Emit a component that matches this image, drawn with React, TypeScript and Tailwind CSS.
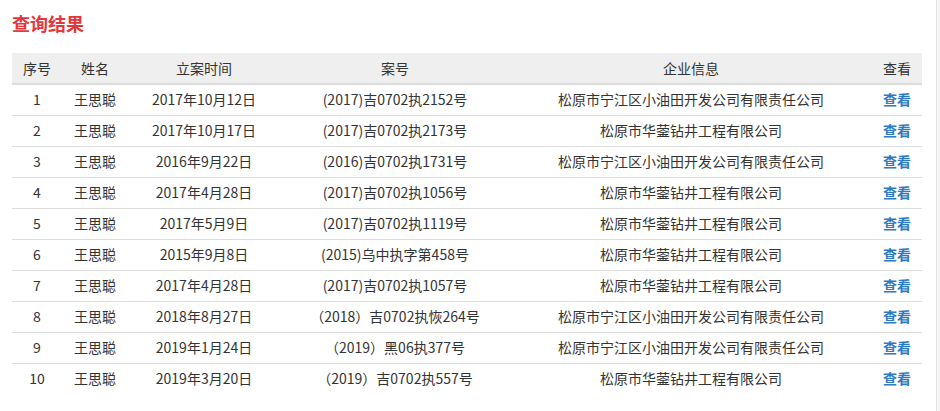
const rows = [
  ["1", "王思聪", "2017年10月12日", "(2017)吉0702执2152号", "松原市宁江区小油田开发公司有限责任公司"],
  ["2", "王思聪", "2017年10月17日", "(2017)吉0702执2173号", "松原市华蓥钻井工程有限公司"],
  ["3", "王思聪", "2016年9月22日", "(2016)吉0702执1731号", "松原市宁江区小油田开发公司有限责任公司"],
  ["4", "王思聪", "2017年4月28日", "(2017)吉0702执1056号", "松原市华蓥钻井工程有限公司"],
  ["5", "王思聪", "2017年5月9日", "(2017)吉0702执1119号", "松原市华蓥钻井工程有限公司"],
  ["6", "王思聪", "2015年9月8日", "(2015)乌中执字第458号", "松原市华蓥钻井工程有限公司"],
  ["7", "王思聪", "2017年4月28日", "(2017)吉0702执1057号", "松原市华蓥钻井工程有限公司"],
  ["8", "王思聪", "2018年8月27日", "（2018）吉0702执恢264号", "松原市宁江区小油田开发公司有限责任公司"],
  ["9", "王思聪", "2019年1月24日", "（2019）黑06执377号", "松原市宁江区小油田开发公司有限责任公司"],
  ["10", "王思聪", "2019年3月20日", "（2019）吉0702执557号", "松原市华蓥钻井工程有限公司"],
];

const headers = ["序号", "姓名", "立案时间", "案号", "企业信息", "查看"];

export default function App() {
  return (
    <div className="flex h-[411px] w-[940px] bg-[#f7f7f7] font-['Noto_Sans_CJK_SC',sans-serif] text-[#333]">
      <div className="w-[937px] border-r border-[#e3e3e3] bg-white pl-3">
        <h2 className="pt-[11px] text-[18px] font-bold leading-6 text-[#e2383c]">查询结果</h2>
        <table className="mt-[18px] w-[910px] table-fixed border-collapse text-center text-[14px]">
          <colgroup>
            <col className="w-[50px]" />
            <col className="w-[66px]" />
            <col className="w-[152px]" />
            <col className="w-[230px]" />
            <col className="w-[362px]" />
            <col className="w-[50px]" />
          </colgroup>
          <thead>
            <tr className="h-[31px] border-b-2 border-[#dcdcdc] bg-[#efefef]">
              {headers.map((h) => (
                <th key={h} className="font-normal">{h}</th>
              ))}
            </tr>
          </thead>
          <tbody>
            {rows.map((r, i) => (
              <tr key={r[0]} className={i < rows.length - 1 ? "h-[31px] border-b border-[#dddddd]" : "h-[30px]"}>
                {r.map((c, j) => (
                  <td key={j} className="whitespace-nowrap">{c}</td>
                ))}
                <td className="font-bold text-[#2f7bc2]">查看</td>
              </tr>
            ))}
          </tbody>
        </table>
      </div>
    </div>
  );
}
